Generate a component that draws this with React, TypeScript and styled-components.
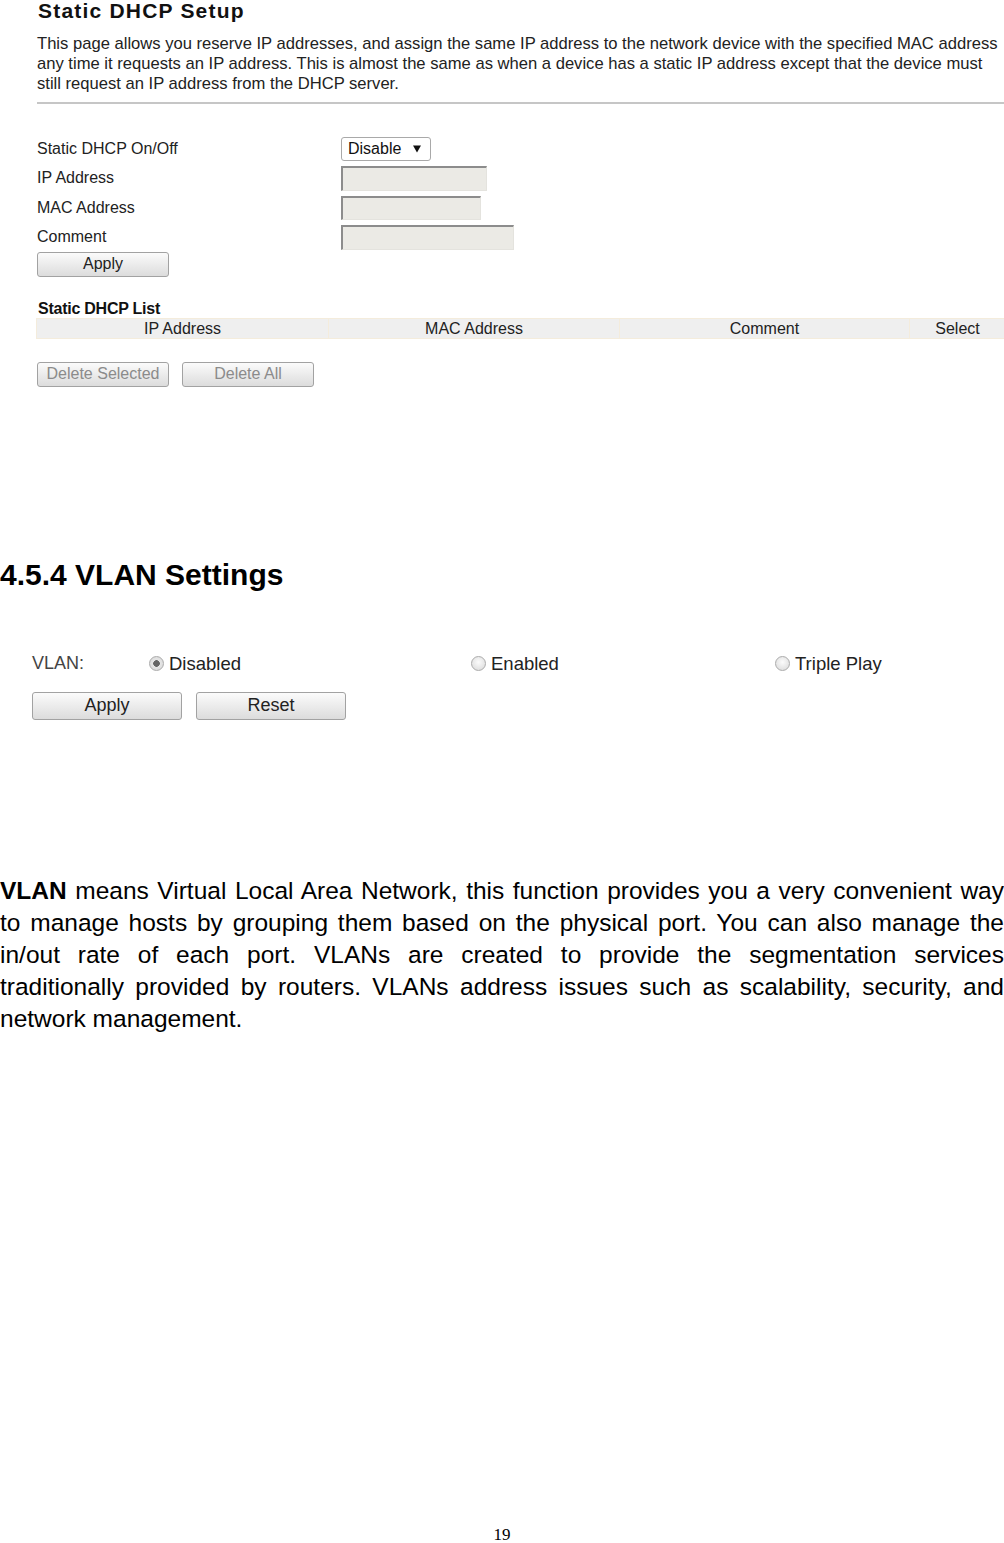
import React from "react";
import styled, { createGlobalStyle } from "styled-components";

const GlobalStyle = createGlobalStyle`
  html, body {
    margin: 0;
    padding: 0;
    background: #fff;
  }
  body {
    font-family: "Liberation Sans", Arial, sans-serif;
  }
`;

const Page = styled.div`
  width: 1004px;
  height: 1543px;
  overflow: hidden;
  display: flex;
  flex-direction: column;
  background: #fff;
`;

/* ---- router screenshot: Static DHCP ---- */

const Shot = styled.section`
  padding-left: 37px;
  display: flex;
  flex-direction: column;
  color: #222;
`;

const ShotTitle = styled.h1`
  margin: 0 0 0 1px;
  font-size: 21px;
  line-height: 21px;
  font-weight: bold;
  letter-spacing: 1.2px;
  color: #111;
`;

const Intro = styled.p`
  margin: 13px 0 0;
  font-size: 16.6px;
  line-height: 20px;
`;

const Rule = styled.hr`
  margin: 7.5px 0 0;
  border: 0;
  height: 2px;
  background: #c6c6c6;
`;

const Form = styled.div`
  margin-top: 33px;
  display: grid;
  grid-template-columns: 304px auto;
  grid-template-rows: 24px 25px 24px 25px;
  row-gap: 5px;
  align-items: center;
  justify-items: start;
`;

const Label = styled.span`
  font-size: 16px;
`;

const Dropdown = styled.div`
  width: 90px;
  height: 24px;
  box-sizing: border-box;
  border: 1px solid #a9a9a9;
  border-radius: 3px;
  background: #fff;
  display: flex;
  align-items: center;
  justify-content: space-between;
  padding: 0 9px 0 6px;
  font-size: 16px;
  color: #111;
`;

const Field = styled.input<{ $w: number }>`
  width: ${(p) => p.$w}px;
  height: 100%;
  box-sizing: border-box;
  margin: 0;
  padding: 0;
  background: #ebeae5;
  border-style: solid;
  border-color: #8c8c8c #e4e3de #e4e3de #8c8c8c;
  border-width: 2px 1px 1px 2px;
  outline: none;
`;

const Button = styled.button<{ $large?: boolean }>`
  width: ${(p) => (p.$large ? 150 : 132)}px;
  height: ${(p) => (p.$large ? 28 : 25)}px;
  box-sizing: border-box;
  margin: 0;
  padding: 0;
  border: 1px solid #a2a2a2;
  border-radius: 3px;
  background: linear-gradient(#fbfbfb, #dcdcdc);
  font-family: "Liberation Sans", Arial, sans-serif;
  font-size: ${(p) => (p.$large ? 18 : 16)}px;
  color: #222;
  &:disabled {
    color: #8b8b8b;
  }
`;

const ApplyRow = styled.div`
  margin-top: 2px;
`;

const ListTitle = styled.h3`
  margin: 22.5px 0 0 1px;
  font-size: 16px;
  line-height: 19px;
  font-weight: bold;
  letter-spacing: -0.25px;
  color: #111;
`;

const ListHead = styled.div`
  margin-left: -1px;
  display: grid;
  grid-template-columns: 292px 291px 290px 96px;
  height: 21px;
  box-sizing: border-box;
  background: #efefef;
  border-top: 1px solid #f4ecdc;
  border-bottom: 1px solid #f4ecdc;
`;

const HeadCell = styled.div`
  border-left: 1px solid #f4ecdc;
  text-align: center;
  font-size: 16px;
  line-height: 19px;
  color: #222;
`;

const ListActions = styled.div`
  margin-top: 22.5px;
  display: flex;
  gap: 13px;
`;

/* ---- manual text ---- */

const Heading = styled.h2`
  margin: 170.5px 0 0;
  font-size: 30px;
  line-height: 36px;
  font-weight: bold;
  color: #000;
`;

const VlanRow = styled.div`
  margin-top: 59.5px;
  padding-left: 32px;
  height: 20px;
  display: grid;
  grid-template-columns: 117px 322px 304px auto;
  align-items: center;
`;

const VlanLabel = styled.span`
  font-size: 18px;
  color: #444;
`;

const Option = styled.label`
  display: inline-flex;
  align-items: center;
  gap: 5px;
  font-size: 18.5px;
  color: #222;
`;

const Radio = styled.input`
  appearance: none;
  width: 15px;
  height: 15px;
  margin: 0;
  box-sizing: border-box;
  border: 1px solid #ababab;
  border-radius: 50%;
  background: radial-gradient(circle at 50% 40%, #fbfbfb, #d8d8d8);
  &:checked {
    background: radial-gradient(circle, #666 0 3px, #e6e6e6 3.6px, #d4d4d4 100%);
  }
`;

const VlanActions = styled.div`
  margin-top: 19px;
  padding-left: 32px;
  display: flex;
  gap: 14px;
`;

const Body = styled.div`
  margin-top: 155px;
  font-size: 24.5px;
  line-height: 32px;
  color: #000;
`;

/* each printed line is its own block so the justified breaks match the page */
const BodyLine = styled.div<{ $last?: boolean }>`
  text-align: justify;
  text-align-last: ${(p) => (p.$last ? "left" : "justify")};
  white-space: nowrap;
`;

const PageNumber = styled.div`
  margin-top: auto;
  text-align: center;
  font-family: "Liberation Serif", "Times New Roman", serif;
  font-size: 17px;
  line-height: 17px;
  color: #000;
`;

const Caret = () => (
  <svg width="8" height="8" viewBox="0 0 8 8">
    <polygon points="0,0.5 8,0.5 4,7.5" fill="#111" />
  </svg>
);

const bodyLines = [
  "means Virtual Local Area Network, this function provides you a very convenient way",
  "to manage hosts by grouping them based on the physical port. You can also manage the",
  "in/out rate of each port. VLANs are created to provide the segmentation services",
  "traditionally provided by routers. VLANs address issues such as scalability, security, and",
  "network management.",
];

export default function App() {
  return (
    <Page>
      <GlobalStyle />
      <Shot>
        <ShotTitle>Static DHCP Setup</ShotTitle>
        <Intro>
          This page allows you reserve IP addresses, and assign the same IP address to the network device
          with the specified MAC address any time it requests an IP address. This is almost the same as when a
          device has a static IP address except that the device must still request an IP address from the DHCP
          server.
        </Intro>
        <Rule />
        <Form>
          <Label>Static DHCP On/Off</Label>
          <Dropdown>
            Disable <Caret />
          </Dropdown>
          <Label>IP Address</Label>
          <Field $w={146} readOnly />
          <Label>MAC Address</Label>
          <Field $w={140} readOnly />
          <Label>Comment</Label>
          <Field $w={173} readOnly />
        </Form>
        <ApplyRow>
          <Button>Apply</Button>
        </ApplyRow>
        <ListTitle>Static DHCP List</ListTitle>
        <ListHead>
          <HeadCell>IP Address</HeadCell>
          <HeadCell>MAC Address</HeadCell>
          <HeadCell>Comment</HeadCell>
          <HeadCell>Select</HeadCell>
        </ListHead>
        <ListActions>
          <Button disabled>Delete Selected</Button>
          <Button disabled>Delete All</Button>
        </ListActions>
      </Shot>

      <Heading>4.5.4 VLAN Settings</Heading>
      <VlanRow>
        <VlanLabel>VLAN:</VlanLabel>
        <Option>
          <Radio type="radio" name="vlan" defaultChecked />
          Disabled
        </Option>
        <Option>
          <Radio type="radio" name="vlan" />
          Enabled
        </Option>
        <Option>
          <Radio type="radio" name="vlan" />
          Triple Play
        </Option>
      </VlanRow>
      <VlanActions>
        <Button $large>Apply</Button>
        <Button $large>Reset</Button>
      </VlanActions>

      <Body>
        {bodyLines.map((line, i) => (
          <BodyLine key={i} $last={i === bodyLines.length - 1}>
            {i === 0 ? (
              <>
                <b>VLAN</b> {line}
              </>
            ) : (
              line
            )}
          </BodyLine>
        ))}
      </Body>

      <PageNumber>19</PageNumber>
    </Page>
  );
}
